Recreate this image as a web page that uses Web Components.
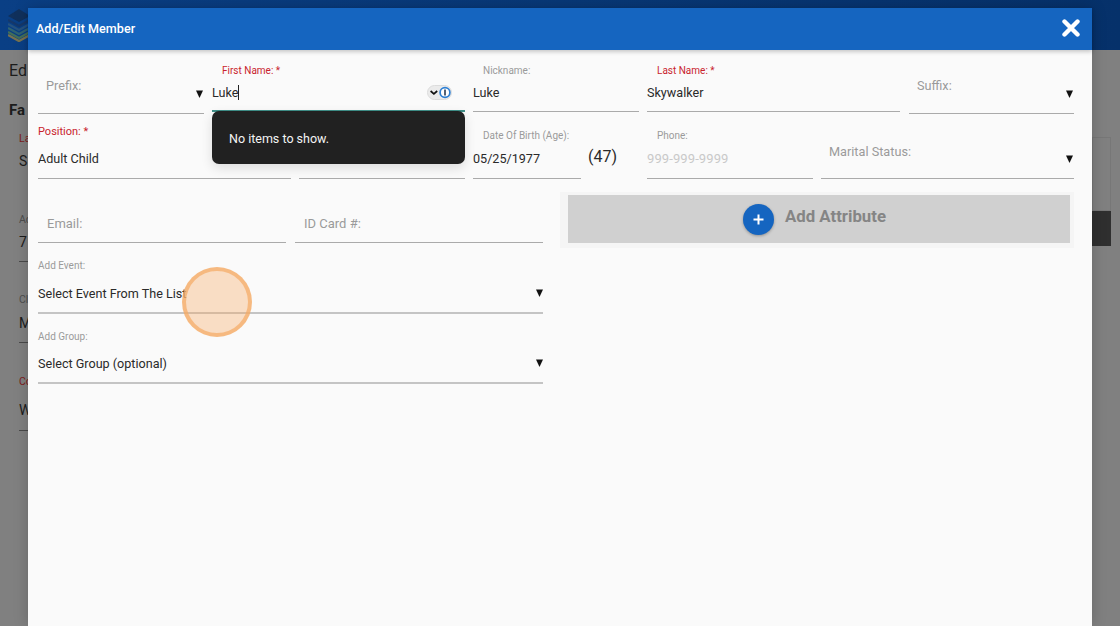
<!DOCTYPE html>
<html>
<head>
<meta charset="utf-8">
<title>Add/Edit Member</title>
<style>
  html, body { margin: 0; height: 100%; overflow: hidden; }
  body { font-family: Roboto, "Liberation Sans", sans-serif; }
</style>
</head>
<body>
<app-page></app-page>
<member-modal>
  <div style="display:grid;grid-template-columns:166px 253px 166px 253px 165px;column-gap:8px;height:64px">
    <form-field label="Prefix:" select style="--label-left:8px;--label-top:29px;--label-size:12.7px;--h:64px"></form-field>
    <form-field label="First Name: *" value="Luke" required focused caret style="--label-left:10px;--label-top:14px;--label-size:10px;--value-top:5px;--h:62px">
      <autofill-icon slot="end"></autofill-icon>
      <no-items slot="popup">No items to show.</no-items>
    </form-field>
    <form-field label="Nickname:" value="Luke" style="--label-left:10px;--label-top:14px;--label-size:10px;--value-top:5px;--h:62px"></form-field>
    <form-field label="Last Name: *" value="Skywalker" required style="--label-left:10px;--label-top:14px;--label-size:10px;--value-top:5px;--h:62px"></form-field>
    <form-field label="Suffix:" select style="--label-left:8px;--label-top:29px;--label-size:12.7px;--h:64px;margin-left:1px;margin-right:-1px"></form-field>
  </div>
  <div style="display:grid;grid-template-columns:253px 166px 108px 50px 166px 253px;column-gap:8px;height:65px">
    <form-field label="Position: *" value="Adult Child" required style="--label-left:0px;--label-top:11px;--label-size:11px;--value-top:10px;--h:65px"></form-field>
    <form-field style="--h:65px"></form-field>
    <form-field label="Date Of Birth (Age):" value="05/25/1977" style="--label-left:10px;--label-top:15px;--label-size:10px;--value-top:6px;--h:65px"></form-field>
    <age-note>(47)</age-note>
    <form-field label="Phone:" value="999-999-9999" hint style="--label-left:10px;--label-top:15px;--label-size:10px;--value-top:6px;--h:65px"></form-field>
    <form-field label="Marital Status:" select style="--label-left:8px;--label-top:31px;--label-size:12.7px;--h:65px"></form-field>
  </div>
  <div style="display:grid;grid-template-columns:505px 1fr;column-gap:17px">
    <div>
      <div style="display:grid;grid-template-columns:248px 248px;column-gap:9px;height:64px">
        <form-field label="Email:" style="--label-left:9px;--label-top:38px;--label-size:13px;--h:64px"></form-field>
        <form-field label="ID Card #:" style="--label-left:9px;--label-top:38px;--label-size:13px;--h:64px"></form-field>
      </div>
      <form-field label="Add Event:" value="Select Event From The List" select style="--label-left:0px;--label-top:16px;--label-size:10px;--value-top:11px;--h:71px;--line:2px solid #c4c4c4;--arrow-right:0px"></form-field>
      <form-field label="Add Group:" value="Select Group (optional)" select style="--label-left:0px;--label-top:16px;--label-size:10px;--value-top:10px;--h:70px;--line:2px solid #c4c4c4;--arrow-right:0px"></form-field>
    </div>
    <add-attribute>Add Attribute</add-attribute>
  </div>
</member-modal>
<click-spot></click-spot>

<script>
// field with a label and an underline, used for inputs and selects
const fieldTemplate = document.createElement('template');
fieldTemplate.innerHTML = `
  <style>
    :host { display: flow-root; position: relative; height: var(--h, 64px); box-sizing: border-box; border-bottom: var(--line, 1px solid #aaa); color: #2a2a2a; }
    :host([focused]) { border-bottom: 2px solid #3f8f88; }
    .label { display: block; height: 14px; line-height: 14px; margin-top: var(--label-top, 0); margin-left: var(--label-left, 0); font-size: var(--label-size, 11px); color: #9a9a9a; white-space: nowrap; }
    :host([required]) .label { color: #c9232d; }
    .row { display: flex; align-items: center; height: 18px; margin-top: var(--value-top, 0); font-size: 12.6px; }
    .value { flex: 1; white-space: nowrap; }
    :host([hint]) .value { color: #c9c9c9; font-size: 13px; letter-spacing: .1px; }
    .caret { display: none; width: 1px; height: 15px; background: #222; }
    :host([caret]) .caret { display: block; }
    :host([caret]) .value { flex: none; }
    .spacer { flex: 1; }
    .arrow { display: none; position: absolute; right: var(--arrow-right, 1px); bottom: 15px; width: 7px; height: 8px; }
    :host([select]) .arrow { display: block; }
    .arrow path { fill: #111; }
  </style>
  <span class="label"></span>
  <div class="row"><span class="value"></span><span class="caret"></span><span class="spacer"></span><slot name="end"></slot></div>
  <svg class="arrow" viewBox="0 0 7 8"><path d="M0 .5h7L3.5 8z"/></svg>
  <slot name="popup"></slot>
`;
class FormField extends HTMLElement {
  constructor() {
    super();
    this.attachShadow({mode: 'open'});
    this.shadowRoot.appendChild(fieldTemplate.content.cloneNode(true));
  }
  connectedCallback() {
    this.shadowRoot.querySelector('.label').textContent = this.getAttribute('label') || '';
    this.shadowRoot.querySelector('.value').textContent = this.getAttribute('value') || '';
  }
}
customElements.define('form-field', FormField);

class AutofillIcon extends HTMLElement {
  constructor() {
    super();
    this.attachShadow({mode: 'open'}).innerHTML = `
      <style>
        :host { display: block; width: 25px; height: 15px; margin: 1px 13px 0 0; }
        svg { display: block; }
      </style>
      <svg width="25" height="15" viewBox="0 0 25 15">
        <rect x=".5" y=".5" width="24" height="14" rx="7" fill="#ebebeb" stroke="#dcdcdc"/>
        <path d="M3.6 6 6.9 8.8 10.2 6" fill="none" stroke="#111" stroke-width="1.7"/>
        <circle cx="18" cy="7.5" r="4.9" fill="#fff" stroke="#2d7fd3" stroke-width="1.7"/>
        <path d="M18 4.6v5.8" stroke="#1a2b45" stroke-width="1.5"/>
      </svg>`;
  }
}
customElements.define('autofill-icon', AutofillIcon);

class NoItems extends HTMLElement {
  constructor() {
    super();
    this.attachShadow({mode: 'open'}).innerHTML = `
      <style>
        :host { position: absolute; left: 0; right: 0; top: calc(100% + 1px); height: 53px; box-sizing: border-box; padding: 20px 17px 0; background: #212121; color: #f4f4f4; font-size: 12.5px; line-height: 16px; border-radius: 7px; z-index: 2; box-shadow: 0 4px 12px rgba(0,0,0,.12); }
      </style>
      <slot></slot>`;
  }
}
customElements.define('no-items', NoItems);

class AgeNote extends HTMLElement {
  constructor() {
    super();
    this.attachShadow({mode: 'open'}).innerHTML = `
      <style>
        :host { display: block; padding-top: 33px; margin-left: -1px; font-size: 16px; line-height: 20px; color: #2a2a2a; }
      </style>
      <slot></slot>`;
  }
}
customElements.define('age-note', AgeNote);

class AddAttribute extends HTMLElement {
  constructor() {
    super();
    this.attachShadow({mode: 'open'}).innerHTML = `
      <style>
        :host { display: block; height: 56px; margin-top: 13px; box-sizing: border-box; padding: 3px 4px 5px 8px; background: #f5f5f5; }
        .btn { height: 48px; box-sizing: border-box; padding-right: 9px; display: flex; align-items: center; justify-content: center; gap: 11px; background: #d0d0d0; color: #858585; font-size: 16.8px; font-weight: 700; }
        .plus { width: 31px; height: 31px; border-radius: 50%; background: #1565c0; box-shadow: 0 1px 3px rgba(0,0,0,.3); display: flex; align-items: center; justify-content: center; }
        .text { margin-top: -6px; }
      </style>
      <div class="btn">
        <span class="plus"><svg width="11" height="11" viewBox="0 0 11 11"><path d="M5.5 .5v10M.5 5.5h10" stroke="#fff" stroke-width="2"/></svg></span>
        <span class="text"><slot></slot></span>
      </div>`;
  }
}
customElements.define('add-attribute', AddAttribute);

class MemberModal extends HTMLElement {
  constructor() {
    super();
    this.attachShadow({mode: 'open'}).innerHTML = `
      <style>
        :host { position: absolute; left: 28px; top: 8px; right: 28px; bottom: 0; background: #fafafa; display: flex; flex-direction: column; box-shadow: 0 0 14px rgba(0,0,0,.2); }
        header { height: 42px; flex: none; box-sizing: border-box; display: flex; align-items: center; justify-content: space-between; padding: 0 12px 2px 8px; background: #1565c0; color: #fff; font-size: 12.6px; font-weight: 500; box-shadow: 0 2px 4px rgba(0,0,0,.2); position: relative; }
        .body { padding: 0 18px 0 10px; }
        svg { display: block; }
      </style>
      <header>
        <span>Add/Edit Member</span>
        <svg width="18" height="18" viewBox="0 0 18 18"><path d="M2.5 2.5l13 13M15.5 2.5l-13 13" stroke="#fff" stroke-width="4.4" stroke-linecap="round"/></svg>
      </header>
      <div class="body"><slot></slot></div>`;
  }
}
customElements.define('member-modal', MemberModal);

class ClickSpot extends HTMLElement {
  constructor() {
    super();
    this.attachShadow({mode: 'open'}).innerHTML = `
      <style>
        :host { position: absolute; left: 182px; top: 267px; width: 70px; height: 70px; box-sizing: border-box; border-radius: 50%; background: rgba(247,170,100,.36); border: 4px solid rgba(245,170,100,.7); }
      </style>`;
  }
}
customElements.define('click-spot', ClickSpot);

// the page behind the dialog, dimmed
class AppPage extends HTMLElement {
  constructor() {
    super();
    this.attachShadow({mode: 'open'}).innerHTML = `
      <style>
        :host { display: flex; flex-direction: column; height: 626px; position: relative; background: #808080; color: #1c1c1c; overflow: hidden; font-size: 14px; }
        .top { height: 50px; flex: none; background: linear-gradient(90deg, #0a3f85, #06316a); padding: 8px 0 0 8px; box-sizing: border-box; }
        svg { display: block; }
        .main { flex: 1; display: flex; justify-content: space-between; }
        .left { padding: 11px 0 0 9px; width: 19px; white-space: nowrap; }
        h1 { font-size: 16px; font-weight: 400; margin: 0; line-height: 20px; }
        h2 { font-size: 15px; font-weight: 700; margin: 19px 0 0; line-height: 20px; }
        .small { font-size: 10.5px; line-height: 12px; color: #4e4e4e; padding-left: 10px; }
        .big { padding-left: 10px; line-height: 16px; }
        .red { color: #7d1b1b; }
        .line { width: 19px; margin-left: 10px; border-bottom: 1px solid #4a4a4a; }
        .right { width: 28px; padding-top: 87px; box-sizing: border-box; }
        .card { height: 74px; border: 1px solid #777; margin-right: 9px; box-sizing: border-box; }
        .dark { height: 35px; background: #2f2f2f; margin-right: 9px; }
      </style>
      <div class="top">
        <svg width="22" height="34" viewBox="0 0 22 34" fill="none" stroke-width="2.4">
          <path d="M0 8 11 1l11 7-11 6z" fill="#10305c"/>
          <path d="M0 12l11 6 11-6" stroke="#15386a"/>
          <path d="M0 16l11 6 11-6" stroke="#25527f"/>
          <path d="M0 20l11 6 11-6" stroke="#2f6372"/>
          <path d="M0 24l11 6 11-6" stroke="#426f58"/>
          <path d="M0 27l11 6 11-6" stroke="#77724f"/>
        </svg>
      </div>
      <div class="main">
        <div class="left">
          <h1>Ed</h1>
          <h2>Fa</h2>
          <div class="small red" style="margin-top:13px">La</div>
          <div class="big" style="padding-top:8px">S</div>
          <div class="small" style="margin-top:45px">Ad</div>
          <div class="big" style="padding:8px 0 11px 10px">7</div>
          <div class="line"></div>
          <div class="small" style="margin-top:32px">Cl</div>
          <div class="big" style="padding:9px 0 11px 10px">M</div>
          <div class="line"></div>
          <div class="small red" style="margin-top:33px">Co</div>
          <div class="big" style="padding:14px 0 12px 10px">W</div>
          <div class="line"></div>
        </div>
        <div class="right">
          <div class="card"></div>
          <div class="dark"></div>
        </div>
      </div>`;
  }
}
customElements.define('app-page', AppPage);
</script>
</body>
</html>
